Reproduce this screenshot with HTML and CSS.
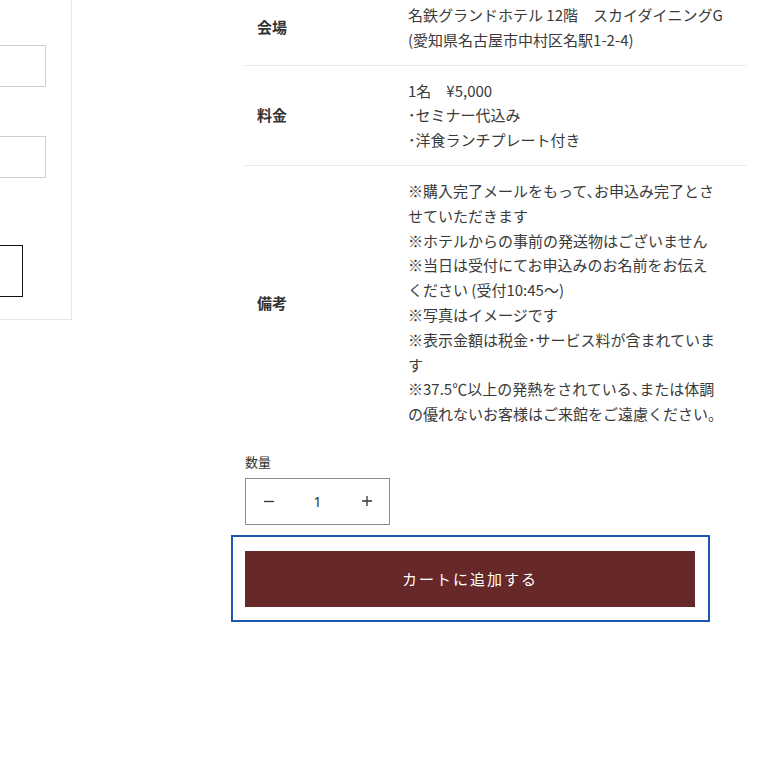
FILE: index.html
```html
<!DOCTYPE html>
<html lang="ja">
<head>
    <meta charset="UTF-8">
    <meta name="viewport" content="width=device-width, initial-scale=1.0">
    <title>スカイダイニングG セミナー</title>
    <link rel="stylesheet" href="styles.css">
</head>
<body>
    <div class="page">
        <div class="side">
            <div class="field"></div>
            <div class="field"></div>
            <div class="field field-dark"></div>
        </div>

        <div class="main">
            <table class="info">
                <tr>
                    <th>会場</th>
                    <td><span class="nowrap">名鉄グランドホテル 12階　スカイダイニングG</span><br>(愛知県名古屋市中村区名駅1-2-4)</td>
                </tr>
                <tr>
                    <th>料金</th>
                    <td>1名　¥5,000<br>･セミナー代込み<br>･洋食ランチプレート付き</td>
                </tr>
                <tr>
                    <th>備考</th>
                    <td>※購入完了メールをもって、お申込み完了とさせていただきます<br>※ホテルからの事前の発送物はございません<br>※当日は受付にてお申込みのお名前をお伝えください (受付10:45～)<br>※写真はイメージです<br>※表示金額は税金･サービス料が含まれています<br>※37.5℃以上の発熱をされている、または体調の優れないお客様はご来館をご遠慮ください。</td>
                </tr>
            </table>

            <label class="qty-label" for="qty">数量</label>
            <div class="qty">
                <button class="qty-btn" type="button" aria-label="減らす">
                    <svg width="10" height="10" viewBox="0 0 10 10"><path d="M0 5.5h10" stroke="#333" stroke-width="1.3"/></svg>
                </button>
                <input class="qty-input" type="text" id="qty" value="1">
                <button class="qty-btn" type="button" aria-label="増やす">
                    <svg width="10" height="10" viewBox="0 0 10 10"><path d="M0 5h10M5 0v10" stroke="#333" stroke-width="1.3"/></svg>
                </button>
            </div>

            <div class="cart-wrap">
                <button class="cart-btn" type="button">カートに追加する</button>
            </div>
        </div>
    </div>
</body>
</html>
```

FILE: styles.css
```css
body {
    margin: 0;
    background: #fff;
    color: #3a3a3a;
    font-family: "Noto Sans CJK JP", "Noto Sans", sans-serif;
}
.page {
    display: flex;
    align-items: flex-start;
}
.side {
    width: 72px;
    height: 320px;
    border-right: 1px solid #e6e6e6;
    border-bottom: 1px solid #e6e6e6;
    padding-top: 45px;
    box-sizing: border-box;
}
.field {
    width: 46px;
    height: 42px;
    border: 1px solid #cfcfcf;
    border-left: none;
    box-sizing: border-box;
    margin-bottom: 49px;
}
.field-dark {
    width: 23px;
    height: 52px;
    border-color: #111;
    margin-top: 67px;
}
.main {
    width: 504px;
    margin-left: 171px;
}
.info {
    width: 100%;
    table-layout: fixed;
    border-collapse: collapse;
    margin-top: -9.5px;
    font-size: 15px;
    line-height: 24.8px;
}
.info tr {
    border-bottom: 1px solid #ececec;
}
.info tr:last-child {
    border-bottom: none;
}
.info th {
    width: 122px;
    padding: 12.5px 14px;
    text-align: left;
    font-weight: bold;
    color: #333;
}
.info td {
    padding: 12.5px 28px 12.5px 15px; /* 本文幅311px */
    vertical-align: top;
    font-feature-settings: "halt";
}
.nowrap {
    white-space: nowrap;
}
.qty-label {
    display: block;
    margin: 12.5px 0 6px 2px;
    font-size: 13px;
    line-height: 20px;
    color: #333;
}
.qty {
    display: flex;
    width: 145px;
    height: 47px;
    margin-left: 2px;
    border: 1px solid #8c8c8c;
    box-sizing: border-box;
}
.qty-btn {
    width: 45px;
    border: none;
    background: none;
    padding: 0;
    display: flex;
    align-items: center;
    justify-content: center;
}
.qty-input {
    width: 53px;
    border: none;
    padding: 0;
    text-align: center;
    font-family: "Noto Sans", sans-serif;
    font-size: 14px;
    color: #333;
}
.cart-wrap {
    width: 479px;
    margin: 10px 0 0 -12px;
    padding: 14px 13px 13px 12px;
    border: 2px solid #1d56b0;
    box-sizing: border-box;
}
.cart-btn {
    display: block;
    width: 450px;
    height: 56px;
    border: none;
    background-color: #662828;
    color: #fff;
    font-family: "Noto Sans CJK JP", sans-serif;
    font-size: 15px;
    letter-spacing: 2px;
    cursor: pointer;
}
```
